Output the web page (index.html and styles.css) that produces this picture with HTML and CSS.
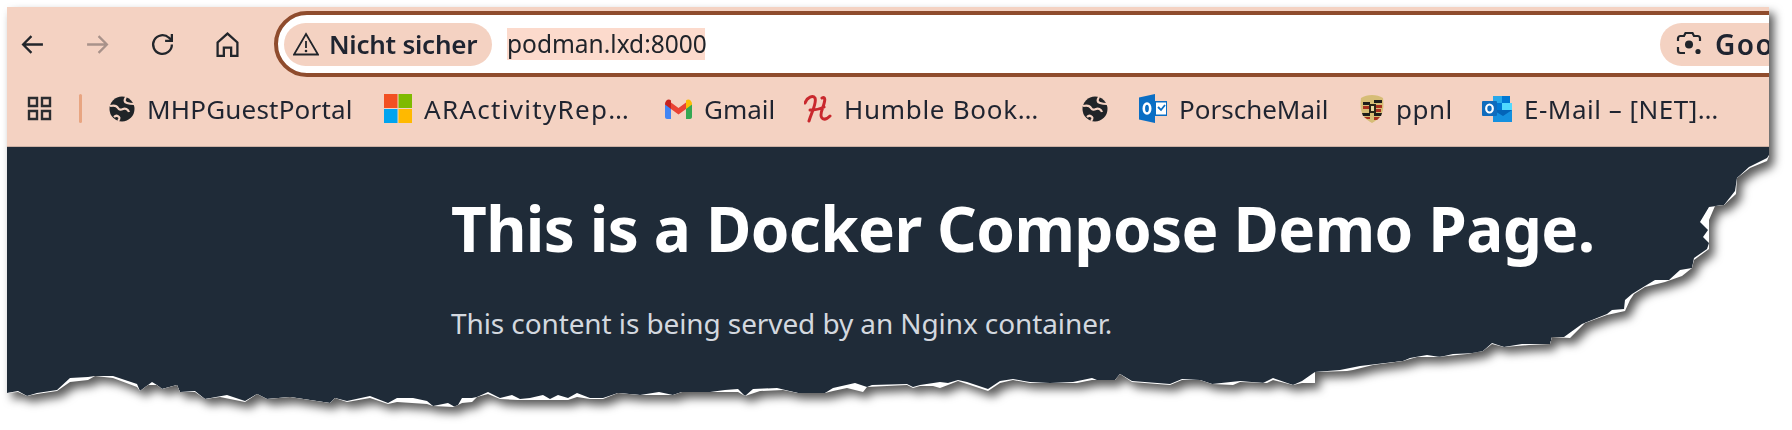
FILE: index.html
```
<!DOCTYPE html>
<html lang="de">
<head>
<meta charset="utf-8">
<title>Docker Compose Demo</title>
<link rel="stylesheet" href="styles.css">
</head>
<body>
<div class="stage">
  <div class="paper">
    <div class="sheet">
      <header class="chrome">
        <div class="navrow">
          <span class="navbtn"><svg class="navicon" viewBox="0 0 24 24"><path d="M22 12H3M11 4l-8 8 8 8"/></svg></span>
          <span class="navbtn navbtn-off"><svg class="navicon" viewBox="0 0 24 24"><path d="M2 12h19M13 4l8 8-8 8"/></svg></span>
          <span class="navbtn"><svg class="navicon" viewBox="0 0 24 24"><path d="M21 12a9 9 0 1 1-2.8-6.5L21 8"/><path d="M21 2v6.5h-6.5"/></svg></span>
          <span class="navbtn"><svg class="navicon" viewBox="0 0 24 24"><path d="M2.5 23V10L12 1.5 21.500 10v13h-6v-8h-7v8z"/></svg></span>
          <div class="omnibox">
            <div class="chip">
              <svg class="warn" viewBox="0 0 26 24"><path class="warn-line" d="M13 2 25 22.500H1z"/><path class="warn-line" d="M13 9v7"/><circle class="warn-dot" cx="13" cy="19" r="1.300"/></svg>
              <span class="chip-text">Nicht sicher</span>
            </div>
            <span class="url">podman.lxd:8000</span>
            <div class="lens-chip">
              <svg class="lens" viewBox="0 0 26 26"><path class="lens-line" d="M2 10V7.500C2 6 3 5 4.500 5H8l1.500-3h7L18 5h3.500C23 5 24 6 24 7.500V10M2 16v3.500C2 21 3 22 4.500 22H9"/><circle class="lens-dot" cx="13" cy="13.500" r="4"/><circle class="lens-dot" cx="22" cy="20.500" r="2.600"/></svg>
              <span class="chip-text lens-text">Google</span>
            </div>
          </div>
        </div>
        <nav class="bookmarks">
          <svg class="apps" viewBox="0 0 25 25"><path d="M2 2h8v8H2zM15 2h8v8h-8zM2 15h8v8H2zM15 15h8v8h-8z"/></svg>
          <span class="divider"></span>
          <a class="mark mark-mhp"><svg class="ico" viewBox="0 0 26 26"><use href="#globe"/></svg><span>MHPGuestPortal</span></a>
          <a class="mark mark-ar"><svg class="ico ico-ms" viewBox="0 0 28 29"><rect width="13.500" height="14" fill="#f25022"/><rect x="14.500" width="13.500" height="14" fill="#7fba00"/><rect y="15" width="13.500" height="14" fill="#00a4ef"/><rect x="14.500" y="15" width="13.500" height="14" fill="#ffb900"/></svg><span>ARActivityRep…</span></a>
          <a class="mark mark-gmail"><svg class="ico ico-gmail" viewBox="0 0 27 20"><path fill="#4285f4" d="M0 5v13c0 1 1 2 2 2h4V9z"/><path fill="#34a853" d="M27 5v13c0 1-1 2-2 2h-4V9z"/><path fill="#ea4335" d="M6 3.500 13.500 9 21 3.500V10l-7.500 5.500L6 10z"/><path fill="#c5221f" d="M0 5c0-4 4-6 6-3.500V10L0 5.500z"/><path fill="#fbbc04" d="M27 5c0-4-4-6-6-3.500V10l6-4.500z"/></svg><span>Gmail</span></a>
          <a class="mark mark-humble"><svg class="ico ico-humble" viewBox="0 0 28 28"><path class="humble-line" d="M1 8C3 2 9 0 11 3c2 5-3 13-6 23M18 3c4-2 3 3 1 9-2 5-3 9-1 11 2 2 5 1 8-2M6 15c5 0 10-1 14-3"/></svg><span>Humble Book…</span></a>
          <a class="mark mark-globe"><svg class="ico" viewBox="0 0 26 26"><use href="#globe"/></svg></a>
          <a class="mark mark-porsche"><svg class="ico ico-ms" viewBox="0 0 28 29"><path fill="#0a6ec4" d="M0 3.500 16 0v29L0 25.500z"/><path fill="#0a6ec4" d="M16 7h12v15H16z"/><path fill="#fff" d="M17 8.500h10v12H17z"/><path fill="none" stroke="#0a6ec4" stroke-width="1.800" d="M19 13l3 3 4-5"/><ellipse cx="8" cy="14.500" rx="3.200" ry="5" fill="none" stroke="#fff" stroke-width="2.600"/></svg><span>PorscheMail</span></a>
          <a class="mark mark-ppnl"><svg class="ico ico-crest" viewBox="0 0 24 29"><path fill="#d6bd76" d="M1 4C7 0 17 0 23 4c1 10 1 19-11 25C0 23 0 14 1 4z"/><path fill="#1d1d1b" d="M3 8h7v3H3zM14 6h8v3h-8zM2 19h8v3H3zM14 19h8l-1 3h-7z"/><path fill="#a8301f" d="M3 12h7v3H3zM14 11h8v3h-8zM14 15h7v3h-7zM4 23h6v2H7zM14 23h6l-3 3h-3z"/><rect x="9" y="10" width="7" height="9" fill="#2a2419"/><path fill="#e8d9a0" d="M11 12h3v5h-3z"/></svg><span>ppnl</span></a>
          <a class="mark mark-mail"><svg class="ico ico-outlook" viewBox="0 0 30 26"><path fill="#28a8ea" d="M11 0h9v7h-9z"/><path fill="#0078d4" d="M20 0h8v7h-8zM11 7h9v7h-9z"/><path fill="#50d9ff" d="M20 7h10v7H20z"/><path fill="#0364b8" d="M11 14h19v12H11z"/><path fill="#1490df" d="M11 14l10 6 9-6v12H11z"/><rect y="5" width="15" height="15" rx="1" fill="#0f6cbd"/><ellipse cx="7.500" cy="12.500" rx="3.300" ry="4" fill="none" stroke="#fff" stroke-width="2.200"/></svg><span>E-Mail – [NET]…</span></a>
        </nav>
      </header>
      <main class="content">
        <h1 class="title">This is a Docker Compose Demo Page.</h1>
        <p class="lead">This content is being served by an Nginx container.</p>
      </main>
    </div>
  </div>
</div>
<svg class="defs" width="0" height="0"><defs><g id="globe"><circle cx="13" cy="13" r="12.500" fill="#202428"/><path fill="none" stroke="#f4d2c2" stroke-width="2.200" d="M1 10c4-1 7 0 8 2s3 2 5 1 5 0 6 3M17 1c-2 3-2 5 1 6s5 1 7 1M5 21c2-2 4-1 5 0s0 3-1 4"/></g></defs></svg>
</body>
</html>
```
FILE: styles.css
```
html, body {
  margin: 0;
  padding: 0;
  background: #fff;
}
body {
  width: 1792px;
  height: 430px;
  overflow: hidden;
  font-family: "Noto Sans", "Open Sans", sans-serif;
}
.defs { position: absolute; }
.stage {
  width: 1769px;
  height: 430px;
  filter: drop-shadow(5px 6px 5px rgba(0, 0, 0, .65));
}
.paper {
  width: 100%;
  height: 100%;
  background: #fff;
  clip-path: polygon(7px 7px, 7px 393px, 18px 392px, 27px 396px, 37px 394px, 57px 391px, 70px 382px, 88px 380px, 95px 376px, 113px 378px, 137px 387px, 140px 391px, 148px 385px, 157px 385px, 162px 389px, 177px 385px, 180px 392px, 195px 392px, 205px 399px, 220px 397px, 245px 402px, 257px 394px, 267px 399px, 290px 397px, 330px 403px, 335px 398px, 347px 402px, 370px 398px, 388px 404px, 397px 402px, 427px 404px, 433px 406px, 453px 407px, 458px 405px, 462px 403px, 472px 402px, 477px 397px, 488px 394px, 500px 399px, 518px 400px, 550px 400px, 568px 400px, 577px 397px, 590px 399px, 603px 399px, 618px 393px, 640px 395px, 673px 395px, 682px 392px, 717px 392px, 738px 392px, 745px 396px, 760px 391px, 783px 390px, 798px 393px, 825px 393px, 833px 391px, 847px 388px, 863px 392px, 867px 387px, 907px 385px, 913px 388px, 920px 386px, 933px 386px, 940px 388px, 948px 385px, 958px 381px, 967px 384px, 988px 391px, 1000px 383px, 1013px 380px, 1030px 383px, 1050px 383px, 1077px 383px, 1092px 380px, 1115px 380px, 1120px 374px, 1132px 382px, 1170px 385px, 1182px 380px, 1200px 380px, 1212px 384px, 1233px 385px, 1240px 382px, 1267px 383px, 1273px 380px, 1293px 385px, 1302px 383px, 1315px 383px, 1315px 372px, 1347px 371px, 1353px 370px, 1373px 365px, 1403px 361px, 1417px 357px, 1437px 357px, 1467px 354px, 1483px 351px, 1492px 344px, 1504px 347px, 1529px 345px, 1550px 344px, 1552px 337px, 1570px 338px, 1585px 323px, 1607px 315px, 1625px 311px, 1630px 300px, 1634px 294px, 1645px 287px, 1665px 282px, 1682px 276px, 1692px 268px, 1694px 260px, 1709px 249px, 1709px 235px, 1709px 220px, 1715px 206px, 1724px 205px, 1736px 194px, 1737px 178px, 1750px 168px, 1767px 161px, 1769px 156px, 1769px 7px);
}
.sheet {
  box-sizing: border-box;
  width: 100%;
  height: 100%;
  padding: 7px 0 0 7px;
  display: flex;
  flex-direction: column;
  clip-path: polygon(7px 7px, 7px 393px, 18px 391px, 27px 396px, 37px 393px, 57px 390px, 70px 378px, 88px 377px, 95px 376px, 113px 376px, 137px 384px, 140px 391px, 148px 385px, 152px 382px, 157px 385px, 162px 389px, 177px 385px, 180px 392px, 195px 391px, 205px 399px, 227px 395px, 245px 401px, 257px 394px, 267px 399px, 290px 397px, 330px 403px, 335px 398px, 347px 401px, 370px 396px, 388px 403px, 397px 398px, 413px 398px, 427px 401px, 433px 406px, 448px 403px, 455px 407px, 458px 405px, 462px 398px, 472px 398px, 477px 397px, 488px 392px, 500px 398px, 512px 395px, 520px 399px, 530px 398px, 543px 395px, 550px 399px, 558px 395px, 568px 398px, 577px 393px, 590px 398px, 603px 398px, 618px 393px, 640px 395px, 659px 392px, 673px 395px, 682px 392px, 710px 392px, 725px 390px, 738px 389px, 745px 396px, 753px 389px, 777px 388px, 798px 393px, 825px 393px, 833px 388px, 855px 383px, 867px 387px, 872px 385px, 907px 384px, 913px 387px, 920px 385px, 940px 382px, 948px 383px, 958px 380px, 967px 382px, 988px 389px, 1000px 381px, 1013px 379px, 1030px 382px, 1050px 383px, 1073px 382px, 1092px 378px, 1097px 380px, 1115px 380px, 1120px 374px, 1132px 381px, 1170px 384px, 1182px 379px, 1200px 380px, 1212px 384px, 1240px 381px, 1263px 383px, 1273px 378px, 1293px 385px, 1302px 381px, 1312px 374px, 1315px 372px, 1340px 370px, 1360px 366px, 1377px 364px, 1403px 361px, 1410px 358px, 1427px 355px, 1440px 357px, 1453px 354px, 1477px 353px, 1483px 351px, 1492px 343px, 1504px 347px, 1522px 344px, 1550px 344px, 1552px 337px, 1564px 337px, 1582px 324px, 1607px 314px, 1612px 310px, 1624px 309px, 1625px 300px, 1632px 294px, 1645px 286px, 1655px 280px, 1669px 280px, 1680px 270px, 1692px 268px, 1694px 258px, 1707px 249px, 1709px 243px, 1703px 237px, 1708px 230px, 1700px 222px, 1709px 207px, 1724px 205px, 1735px 191px, 1737px 178px, 1749px 167px, 1767px 158px, 1769px 155px, 1769px 7px);
}
.chrome {
  flex: none;
  height: 140px;
  box-sizing: border-box;
  padding-top: 4px;
  background: #f4d2c2;
  border-bottom: 1px solid #cbb0a4;
  color: #1f2430;
  overflow: hidden;
}
.navrow {
  height: 66px;
  display: flex;
  align-items: center;
  gap: 15px;
}
.navbtn {
  flex: none;
  width: 50px;
  display: flex;
  justify-content: center;
}
.navicon {
  width: 25px;
  height: 25px;
  fill: none;
  stroke: #22262b;
  stroke-width: 2.200;
}
.navbtn-off .navicon { stroke: #a8928a; }
.omnibox {
  flex: none;
  width: 1600px;
  height: 66px;
  box-sizing: border-box;
  margin-left: 7px;
  border: 4px solid #8f4c2d;
  border-radius: 33px;
  background: #fff;
  display: flex;
  align-items: center;
  padding-left: 6px;
}
.chip {
  flex: none;
  width: 208px;
  height: 43px;
  box-sizing: border-box;
  padding-left: 9px;
  border-radius: 22px;
  background: #f4d2c2;
  display: flex;
  align-items: center;
  gap: 10px;
}
.warn {
  width: 26px;
  height: 24px;
}
.warn-line {
  fill: none;
  stroke: #20242a;
  stroke-width: 1.800;
}
.warn-dot { fill: #20242a; }
.chip-text {
  font-size: 26px;
  font-weight: 600;
  letter-spacing: -.25px;
  white-space: nowrap;
}
.lens-text {
  font-size: 28px;
  letter-spacing: 1.500px;
}
.url {
  flex: none;
  width: 198px;
  margin-left: 15px;
  height: 32px;
  line-height: 32px;
  background: #fcdacc;
  font-size: 24.500px;
  color: #20242a;
  white-space: nowrap;
}
.lens-chip {
  flex: none;
  margin-left: 955px;
  width: 210px;
  height: 43px;
  box-sizing: border-box;
  padding-left: 16px;
  border-radius: 22px;
  background: #f4d2c2;
  display: flex;
  align-items: center;
  gap: 13px;
}
.lens {
  width: 26px;
  height: 26px;
}
.lens-line {
  fill: none;
  stroke: #20242a;
  stroke-width: 2.200;
}
.lens-dot { fill: #20242a; }
.bookmarks {
  height: 63px;
  display: flex;
  align-items: center;
  padding-left: 20px;
}
.apps {
  flex: none;
  width: 25px;
  height: 25px;
  fill: none;
  stroke: #2b2d30;
  stroke-width: 2.400;
}
.divider {
  flex: none;
  width: 3px;
  height: 29px;
  margin: 0 27px 0 27px;
  border-radius: 2px;
  background: #e8a581;
}
.mark {
  flex: none;
  display: flex;
  align-items: center;
  gap: 12px;
  font-size: 26px;
  white-space: nowrap;
  color: #1f2430;
}
.ico {
  flex: none;
  width: 26px;
  height: 26px;
}
.ico-ms { width: 28px; height: 29px; }
.ico-gmail { width: 27px; height: 20px; }
.ico-humble { width: 28px; height: 28px; }
.humble-line {
  fill: none;
  stroke: #c9282d;
  stroke-width: 3;
  stroke-linecap: round;
}
.ico-crest { width: 24px; height: 29px; }
.ico-outlook { width: 30px; height: 26px; }
.mark-mhp { width: 275px; letter-spacing: .2px; }
.mark-ar { width: 281px; letter-spacing: 1.300px; }
.mark-gmail { width: 139px; }
.mark-humble { width: 278px; letter-spacing: .7px; }
.mark-globe { width: 57px; }
.mark-porsche { width: 221px; }
.mark-ppnl { width: 122px; letter-spacing: .5px; }
.mark-mail { letter-spacing: .5px; }
.content {
  flex: 1;
  background: #1f2b38;
  padding-left: 444px;
}
.title {
  margin: 38px 0 0;
  font-size: 62px;
  line-height: 86px;
  font-weight: 700;
  letter-spacing: -.6px;
  color: #fff;
  white-space: nowrap;
}
.lead {
  margin: 32px 0 0;
  font-size: 28px;
  line-height: 40px;
  letter-spacing: -.1px;
  color: #d3d8df;
  white-space: nowrap;
}
```
